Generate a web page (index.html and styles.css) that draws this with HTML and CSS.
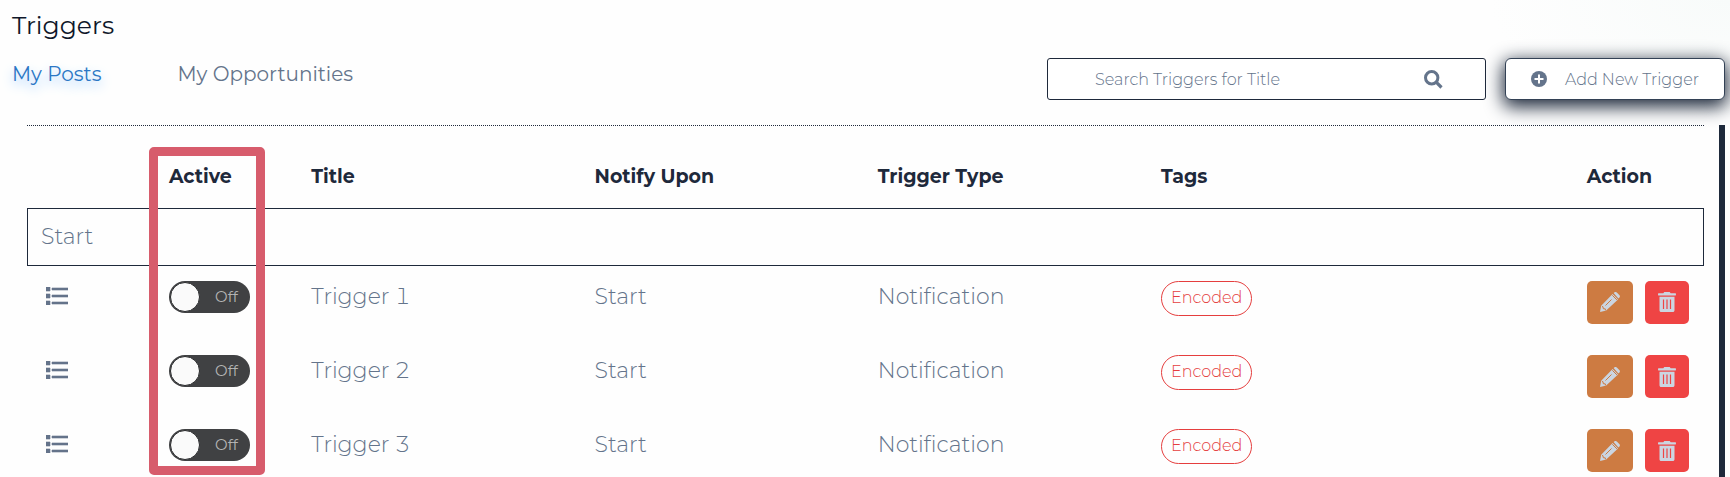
FILE: index.html
```html
<!DOCTYPE html>
<html lang="en">
<head>
    <meta charset="UTF-8">
    <meta name="viewport" content="width=device-width, initial-scale=1.0">
    <title>Triggers</title>
    <link rel="stylesheet" href="styles.css">
</head>
<body>
    <!-- Shared icons -->
    <svg class="icon-defs" aria-hidden="true">
        <symbol id="icon-list" viewBox="0 0 22 18">
            <path d="M0 0h4v4H0zM0 7h4v4H0zM0 14h4v4H0zM6 1h16v2H6zM6 8h16v2H6zM6 15h16v2H6z" fill="currentColor" stroke="currentColor" stroke-width="0.6"/>
        </symbol>
        <symbol id="icon-pencil" viewBox="0 0 20 20">
            <path d="M13.6 1l1-.7c.8-.5 1.6-.4 2.2.2l2.7 2.7c.6.7.6 1.5 0 2.2l-1.1 1.1z M12.6 2l5.4 5.4L6.2 18.6 0 20l1.2-6.2z" fill="currentColor"/>
            <path d="M12.3 3.3l4.6 4.6M5.5 13.5l6-6M2 14.6l1 .1.3 2 2 .2.2 1.4" fill="none" stroke="#cd7b42" stroke-width="1"/>
        </symbol>
        <symbol id="icon-trash" viewBox="0 0 18 20">
            <path d="M.7 1.3h4.6L6.3 0h5.4l1 1.3h4.6c.9 0 .9 2.2 0 2.2H.7c-.9 0-.9-2.2 0-2.2zM1.5 4.7h15v13.5c0 1-.7 1.8-1.7 1.8H3.2c-1 0-1.700-.8-1.700-1.800z" fill="currentColor"/>
            <path d="M5.5 7.5v9.5M9 7.5v9.5M12.5 7.5v9.5" stroke="#ef4444" stroke-width="1.2"/>
        </symbol>
    </svg>

    <header class="page-header">
        <h1>Triggers</h1>
        <div class="toolbar">
            <nav class="tabs">
                <a href="#posts" class="tab active">My Posts</a>
                <a href="#opportunities" class="tab">My Opportunities</a>
            </nav>
            <div class="actions">
                <div class="search">
                    <input type="text" placeholder="Search Triggers for Title" aria-label="Search Triggers for Title">
                    <svg width="19" height="19" viewBox="0 0 19 19" aria-hidden="true">
                        <circle cx="7.7" cy="7.7" r="6.2" fill="none" stroke="currentColor" stroke-width="3"/>
                        <path d="M12.2 12.2l5.3 5.3" stroke="currentColor" stroke-width="3.2"/>
                    </svg>
                </div>
                <button type="button" class="add-button">
                    <svg width="16" height="16" viewBox="0 0 16 16" aria-hidden="true">
                        <circle cx="8" cy="8" r="8" fill="currentColor"/>
                        <path d="M8 3.5v9M3.5 8h9" stroke="#fff" stroke-width="2"/>
                    </svg>
                    <span>Add New Trigger</span>
                </button>
            </div>
        </div>
    </header>

    <main class="list">
        <div class="highlight"></div>
        <div class="table-wrap">
            <table class="triggers">
                <colgroup>
                    <col class="col-handle">
                    <col class="col-active">
                    <col class="col-wide">
                    <col class="col-wide">
                    <col class="col-wide">
                    <col class="col-tags">
                    <col>
                </colgroup>
                <thead>
                    <tr>
                        <th></th>
                        <th>Active</th>
                        <th>Title</th>
                        <th>Notify Upon</th>
                        <th>Trigger Type</th>
                        <th>Tags</th>
                        <th>Action</th>
                    </tr>
                </thead>
                <tbody>
                    <tr class="group">
                        <td colspan="7">Start</td>
                    </tr>
                    <tr>
                        <td><svg class="handle" width="22" height="18"><use href="#icon-list"/></svg></td>
                        <td><label class="toggle"><input type="checkbox" aria-label="Trigger 1 active"><span>Off</span></label></td>
                        <td>Trigger 1</td>
                        <td>Start</td>
                        <td>Notification</td>
                        <td><span class="tag">Encoded</span></td>
                        <td>
                            <div class="row-buttons">
                                <button type="button" class="edit" aria-label="Edit"><svg width="20" height="20"><use href="#icon-pencil"/></svg></button>
                                <button type="button" class="delete" aria-label="Delete"><svg width="18" height="20"><use href="#icon-trash"/></svg></button>
                            </div>
                        </td>
                    </tr>
                    <tr>
                        <td><svg class="handle" width="22" height="18"><use href="#icon-list"/></svg></td>
                        <td><label class="toggle"><input type="checkbox" aria-label="Trigger 2 active"><span>Off</span></label></td>
                        <td>Trigger 2</td>
                        <td>Start</td>
                        <td>Notification</td>
                        <td><span class="tag">Encoded</span></td>
                        <td>
                            <div class="row-buttons">
                                <button type="button" class="edit" aria-label="Edit"><svg width="20" height="20"><use href="#icon-pencil"/></svg></button>
                                <button type="button" class="delete" aria-label="Delete"><svg width="18" height="20"><use href="#icon-trash"/></svg></button>
                            </div>
                        </td>
                    </tr>
                    <tr>
                        <td><svg class="handle" width="22" height="18"><use href="#icon-list"/></svg></td>
                        <td><label class="toggle"><input type="checkbox" aria-label="Trigger 3 active"><span>Off</span></label></td>
                        <td>Trigger 3</td>
                        <td>Start</td>
                        <td>Notification</td>
                        <td><span class="tag">Encoded</span></td>
                        <td>
                            <div class="row-buttons">
                                <button type="button" class="edit" aria-label="Edit"><svg width="20" height="20"><use href="#icon-pencil"/></svg></button>
                                <button type="button" class="delete" aria-label="Delete"><svg width="18" height="20"><use href="#icon-trash"/></svg></button>
                            </div>
                        </td>
                    </tr>
                </tbody>
            </table>
        </div>
    </main>
</body>
</html>
```

FILE: styles.css
```css
* {
    box-sizing: border-box;
}

body {
    margin: 0;
    height: 100vh;
    overflow: hidden;
    display: flex;
    flex-direction: column;
    font-family: Montserrat, Inter, sans-serif;
    font-weight: 350;
    color: #64748b;
    background: radial-gradient(ellipse 240px 120px at top right, #f8fbfa, #fefefe);
}

button,
input {
    font: inherit;
    color: inherit;
}

.icon-defs {
    display: none;
}

.page-header {
    padding: 8px 5px 0 12px;
}

h1 {
    margin: 0;
    font-size: 25px;
    line-height: 34px;
    font-weight: 400;
    color: #0f172a;
}

.toolbar {
    display: flex;
    justify-content: space-between;
    padding-top: 16px;
}

.tabs {
    display: flex;
    gap: 76px;
    font-size: 20px;
    font-weight: 400;
    line-height: 32px;
}

.tab {
    color: #64748b;
    text-decoration: none;
}

.tab.active {
    color: #2b77c5;
    text-shadow: 0 5px 12px #93c5fd;
}

.actions {
    display: flex;
    gap: 19px;
    font-size: 16px;
}

.search {
    display: flex;
    align-items: center;
    width: 439px;
    height: 42px;
    padding: 0 42px 0 47px;
    border: 1px solid #1e293b;
    border-radius: 3px;
    background: #fff;
}

.search input {
    flex: 1;
    min-width: 0;
    padding: 0;
    border: 0;
    outline: 0;
    background: none;
}

.search input::placeholder {
    color: #64748b;
    opacity: 1;
}

.add-button {
    display: flex;
    align-items: center;
    justify-content: space-between;
    width: 220px;
    height: 42px;
    padding: 0 25px;
    border: 1px solid #334155;
    border-radius: 6px;
    background: #fff;
    box-shadow: 0 5px 18px 2px #1e293b;
}

.list {
    position: relative;
    flex: 1;
    min-height: 0;
    margin: 25px 5px 0 27px;
    padding-right: 15px;
    border-right: 6px solid #1e293b;
}

.table-wrap {
    border-top: 1px dotted #1e293b;
}

.triggers {
    width: 100%;
    table-layout: fixed;
    border-collapse: collapse;
    font-size: 22px;
    line-height: 32px;
    font-variant-numeric: tabular-nums;
}

.col-handle {
    width: 7.6%;
}

.col-active {
    width: 8.5%;
}

.col-wide {
    width: 16.9%;
}

.col-tags {
    width: 25.4%;
}

th {
    height: 82px;
    padding: 20px 14px 0;
    font-size: 19px;
    font-weight: 700;
    text-align: left;
    color: #1e293b;
}

td {
    height: 74px;
    padding: 15px 14px 0;
    vertical-align: top;
}

.group td {
    height: 57px;
    padding: 0 13px;
    vertical-align: middle;
    border: 1px solid #1e293b;
}

.group + tr td {
    height: 75px;
}

.handle {
    display: block;
    margin: 6px 4px;
}

.toggle {
    position: relative;
    display: flex;
    align-items: center;
    justify-content: flex-end;
    width: 81px;
    height: 32px;
    padding-right: 12px;
    border-radius: 16px;
    background: #404143;
    font-size: 15px;
    font-weight: 400;
    color: #b4b4b4;
}

.toggle input {
    position: absolute;
    top: 1px;
    left: 1px;
    width: 30px;
    height: 30px;
    margin: 0;
    appearance: none;
    border: 1px solid #28292b;
    border-radius: 50%;
    background: #fafafa;
}

.toggle input:checked {
    left: 50px;
}

.tag {
    display: block;
    width: fit-content;
    padding: 0 9px 1px;
    border: 1px solid #e53e3e;
    border-radius: 18px;
    font-size: 16px;
    color: #e53e3e;
}

.row-buttons {
    display: flex;
    gap: 12px;
}

.row-buttons button {
    display: flex;
    align-items: center;
    justify-content: center;
    width: 46px;
    height: 43px;
    padding: 0;
    border: 0;
    border-radius: 5px;
    color: #cbd5e1;
}

.row-buttons .edit {
    background: #cd7b42;
}

.row-buttons .delete {
    width: 44px;
    background: #ef4444;
}

/* Frame drawn over the Active column */
.highlight {
    position: absolute;
    top: 22px;
    left: 122px;
    bottom: 2px;
    width: 116px;
    border: 9px solid #d75c6c;
    border-radius: 5px;
    pointer-events: none;
    z-index: 1;
}
```
